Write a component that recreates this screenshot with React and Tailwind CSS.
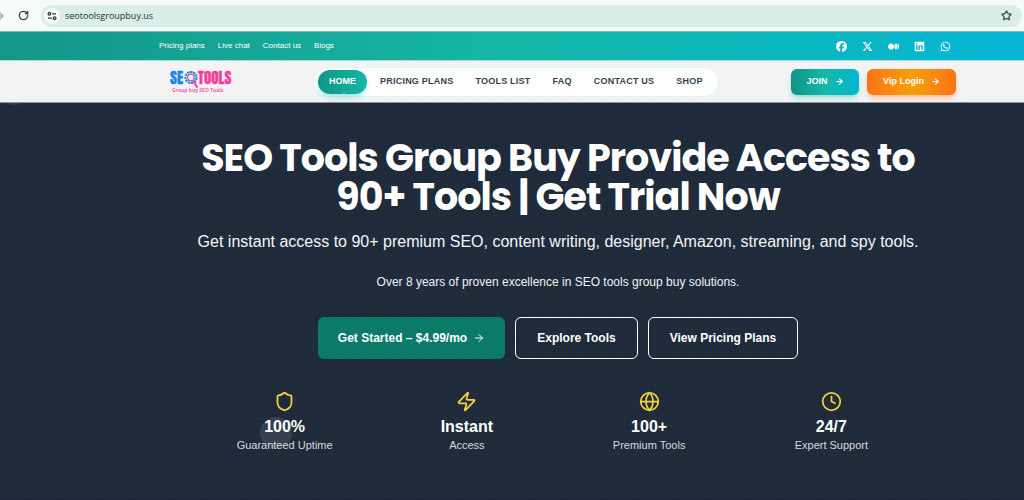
import { ArrowRight, Clock, Globe, RotateCw, Shield, Star, Zap } from "lucide-react";
import { FaFacebook, FaLinkedin, FaMedium, FaWhatsapp, FaXTwitter } from "react-icons/fa6";

const topLinks = ["Pricing plans", "Live chat", "Contact us", "Blogs"];

const socials = [
  { name: "Facebook", Icon: FaFacebook },
  { name: "X", Icon: FaXTwitter },
  { name: "Medium", Icon: FaMedium },
  { name: "LinkedIn", Icon: FaLinkedin },
  { name: "WhatsApp", Icon: FaWhatsapp },
];

const navLinks = ["PRICING PLANS", "TOOLS LIST", "FAQ", "CONTACT US", "SHOP"];

const stats = [
  { Icon: Shield, value: "100%", label: "Guaranteed Uptime" },
  { Icon: Zap, value: "Instant", label: "Access" },
  { Icon: Globe, value: "100+", label: "Premium Tools" },
  { Icon: Clock, value: "24/7", label: "Expert Support" },
];

function BrowserBar() {
  return (
    <div className="flex h-[31px] items-center bg-[#f5fbf9] pr-[2px]">
      <button type="button" aria-label="Forward" className="w-[18px] shrink-0 text-[#9aa5a2]">
        <svg viewBox="0 0 18 12" className="h-3 w-[18px]" fill="none" stroke="currentColor" strokeWidth="1.2">
          <path d="M-2 6H3M0 3L3 6L0 9" />
        </svg>
      </button>
      <button type="button" aria-label="Reload" className="mr-3 text-[#3c4a47]">
        <RotateCw size={11} strokeWidth={3} />
      </button>
      <div className="flex h-[22px] flex-1 items-center gap-[5px] rounded-full bg-[#dbede8] pr-[10px] pl-[3px]">
        <button
          type="button"
          aria-label="Site information"
          className="grid size-4 shrink-0 place-items-center rounded-full bg-[#f5fbf9] text-[#34403d]"
        >
          <svg viewBox="0 0 10 10" className="size-[10px]" fill="none" stroke="currentColor" strokeWidth="1.3">
            <circle cx="2.4" cy="2.8" r="1.3" />
            <path d="M5 2.8H9M1 7.2H5" />
            <circle cx="7.6" cy="7.2" r="1.3" />
          </svg>
        </button>
        <input
          aria-label="Address"
          defaultValue="seotoolsgroupbuy.us"
          className="min-w-0 flex-1 bg-transparent font-['Open_Sans',sans-serif] text-[9px] text-[#25302d] outline-none"
        />
        <button type="button" aria-label="Bookmark" className="text-[#4b5654]">
          <Star size={11} strokeWidth={3} />
        </button>
      </div>
    </div>
  );
}

function TopBar() {
  return (
    <div className="flex h-[30px] items-center justify-between border-t border-b border-t-[#7fbdb4] border-b-[#a5dcdb] bg-linear-to-r from-[#149688] via-[#14b8a6] to-[#06b6d4] pr-[73px] pl-[159px] text-white">
      <nav aria-label="Quick links" className="flex gap-[13px] text-[8px]">
        {topLinks.map((label) => (
          <a key={label} href="#">{label}</a>
        ))}
      </nav>
      <div className="flex gap-[15px]">
        {socials.map(({ name, Icon }) => (
          <a key={name} href="#" aria-label={name}>
            <Icon size={11} />
          </a>
        ))}
      </div>
    </div>
  );
}

function Logo() {
  return (
    <a href="#" aria-label="SEO Tools" className="block h-7 w-16">
      <svg viewBox="0 0 64 28" overflow="visible" className="h-7 w-16 overflow-visible font-['Anton','Bebas_Neue','Oswald',sans-serif]">
        <text x="1" y="16" fontSize="15" fill="#1b86e8" stroke="#1b86e8" strokeWidth="0.3">SE</text>
        <text x="29" y="16" fontSize="15" fill="#f0419d" stroke="#f0419d" strokeWidth="0.3">TOOLS</text>
        <circle cx="22" cy="9.5" r="5.6" fill="#d9e9fa" stroke="#1b86e8" strokeWidth="2" strokeDasharray="2.4 0.7" />
        <circle cx="22" cy="9.5" r="3.3" fill="#f8eaf4" stroke="#c64da8" strokeWidth="1.2" />
        <path d="M24.500 13L28 19" stroke="#f0419d" strokeWidth="2" strokeLinecap="round" />
        <text x="3" y="24" fontSize="5" fontWeight="700" fill="#f363ae" className="font-['Open_Sans',sans-serif]">
          Group buy SEO Tools
        </text>
      </svg>
    </a>
  );
}

function Header() {
  return (
    <header className="flex h-[42px] items-center justify-between border-b border-[#8b929d] bg-[#f3f3f4] pr-[68px] pl-[169px]">
      <Logo />
      <nav
        aria-label="Main"
        className="ml-[80px] flex h-[30px] items-center rounded-full border border-[#dcf8f2] bg-white px-1 text-[9px] font-bold text-[#374151]"
      >
        <a
          href="#"
          aria-current="page"
          className="relative mr-[2px] flex h-6 items-center rounded-full bg-linear-to-r from-[#0f9488] to-[#14b8a6] px-[11px] text-white shadow-md shadow-teal-500/30"
        >
          HOME
          <span className="absolute bottom-0 left-1/2 size-[2px] rounded-full bg-[#2dd4bf]" />
        </a>
        {navLinks.map((label) => (
          <a key={label} href="#" className="px-[11px] tracking-wide">{label}</a>
        ))}
      </nav>
      <div className="ml-auto flex gap-2 text-[9px] font-bold text-white">
        <a
          href="#"
          className="flex h-[26px] w-[68px] items-center justify-center gap-[7px] rounded-md bg-linear-to-r from-[#0f9488] via-[#14b8a6] to-[#06b6d4] shadow-md shadow-teal-500/30"
        >
          JOIN <ArrowRight size={9} strokeWidth={3} />
        </a>
        <a
          href="#"
          className="flex h-[26px] w-[89px] items-center justify-center gap-[7px] rounded-md bg-linear-to-r from-[#f97316] via-[#f59e0b] to-[#f97316] shadow-md shadow-orange-500/30"
        >
          Vip Login <ArrowRight size={9} strokeWidth={3} />
        </a>
      </div>
    </header>
  );
}

function Hero() {
  return (
    <main className="relative flex flex-1 flex-col items-center overflow-hidden border-b-2 border-[#1b2238] bg-[#1f2a3b] bg-[linear-gradient(to_right,#ffffff04_1px,transparent_1px),linear-gradient(to_bottom,#ffffff04_1px,transparent_1px)] bg-size-[18px_18px] bg-position-[7px_9px] pr-[67px] pb-[46px] pl-[159px] text-center text-white">
      <span className="absolute -top-[30px] -left-[2px] size-8 rounded-full bg-white/10" />
      <span className="absolute top-[314px] left-[260px] size-8 rounded-full bg-white/10" />
      <h1 className="mt-[35px] font-['Poppins',sans-serif] text-[38px] leading-[39px] font-bold tracking-tight">
        SEO Tools Group Buy Provide Access to
        <br />
        90+ Tools | Get Trial Now
      </h1>
      <p className="mt-[14px] text-[16px] leading-6 text-[#f5f6f8]">
        Get instant access to 90+ premium SEO, content writing, designer, Amazon, streaming, and spy tools.
      </p>
      <p className="mt-[18px] text-[12px] leading-5 text-[#f0f2f5]">
        Over 8 years of proven excellence in SEO tools group buy solutions.
      </p>
      <div className="mt-[25px] flex gap-[10px] text-[12px] font-bold">
        <a href="#" className="flex h-[42px] items-center gap-[6px] rounded-md bg-[#0b7a69] px-5">
          Get Started – $4.99/mo <ArrowRight size={12} strokeWidth={2} />
        </a>
        <a href="#" className="flex h-[42px] items-center rounded-md border border-white px-[21px]">
          Explore Tools
        </a>
        <a href="#" className="flex h-[42px] items-center rounded-md border border-white px-[21px]">
          View Pricing Plans
        </a>
      </div>
      <ul className="mt-8 grid w-[729px] grid-cols-4">
        {stats.map(({ Icon, value, label }) => (
          <li key={label} className="flex flex-col items-center">
            <Icon size={21} strokeWidth={2} className="text-[#f2d43c]" />
            <strong className="mt-[5px] text-[16px] leading-5">{value}</strong>
            <span className="text-[11px] leading-4 text-[#d5d9df]">{label}</span>
          </li>
        ))}
      </ul>
    </main>
  );
}

export default function App() {
  return (
    <div className="flex min-h-screen flex-col font-['Liberation_Sans',Arial,sans-serif]">
      <BrowserBar />
      <TopBar />
      <Header />
      <Hero />
    </div>
  );
}
